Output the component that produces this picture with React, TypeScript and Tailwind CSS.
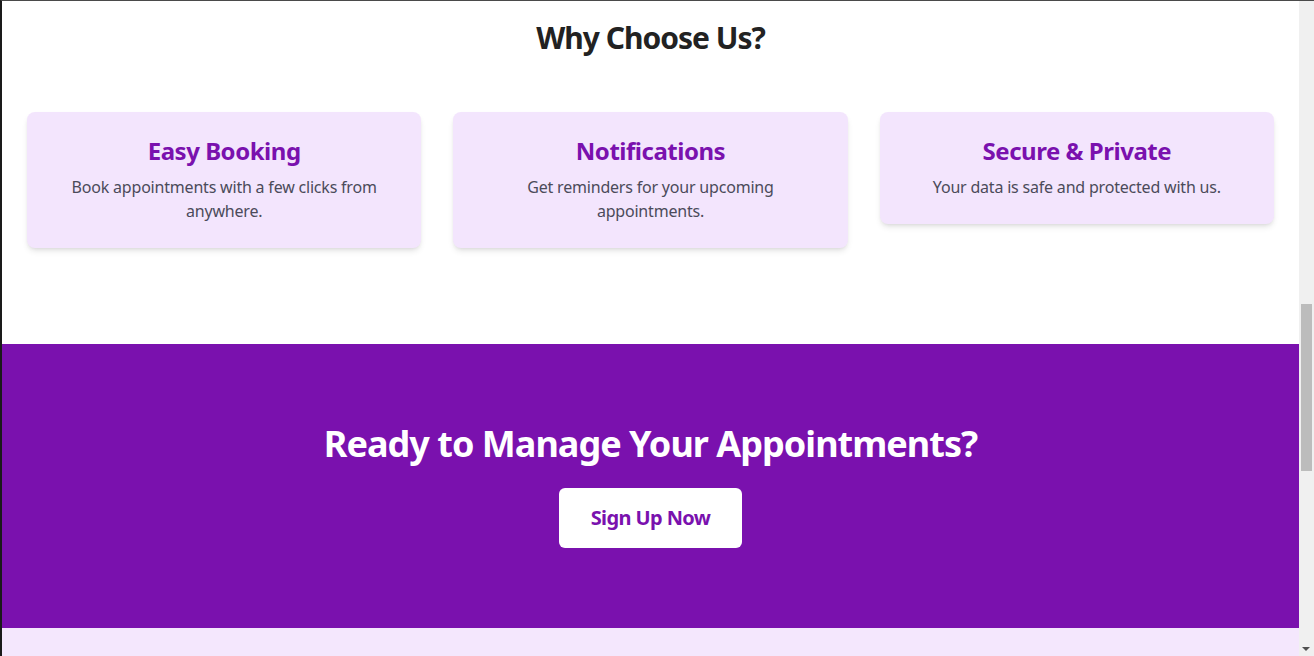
import React from "react";

const features = [
  { title: "Easy Booking", desc: "Book appointments with a few clicks from anywhere." },
  { title: "Notifications", desc: "Get reminders for your upcoming appointments." },
  { title: "Secure & Private", desc: "Your data is safe and protected with us." },
];

export default function App() {
  return (
    <div
      className="flex h-[656px] w-[1314px] overflow-hidden border-t border-l-2 border-t-[#4a4a4a] border-l-[#1a1a1a] bg-white"
      style={{ fontFamily: '"Noto Sans", "Open Sans", sans-serif' }}
    >
      <div className="flex min-w-0 flex-1 flex-col">
        <section className="px-[25px] pt-[19px] pb-24">
          <h2 className="text-center text-3xl font-bold tracking-[-0.033em] text-[#222222]">Why Choose Us?</h2>
          <div className="mt-14 grid grid-cols-3 items-start gap-8">
            {features.map((f) => (
              <div key={f.title} className="rounded-lg bg-[#f3e5fd] px-8 pt-[23px] pb-[25px] text-center shadow-md">
                <h3 className="text-2xl font-bold tracking-[-0.02em] text-[#7a11ae]">{f.title}</h3>
                <p className="mx-auto mt-2 max-w-[320px] text-base leading-6 tracking-[-0.0125em] text-[#4b4b5a]">{f.desc}</p>
              </div>
            ))}
          </div>
        </section>
        <section className="flex flex-col items-center bg-[#7a11ae] py-20">
          <h2 className="text-4xl font-bold tracking-[-0.027em] text-white">Ready to Manage Your Appointments?</h2>
          <button className="mt-6 w-[183px] rounded-md bg-white py-4 text-xl font-bold tracking-[-0.03em] text-[#7a11ae]">
            Sign Up Now
          </button>
        </section>
        <section className="h-40 bg-[#f4e7fd]" />
      </div>
      <div className="relative flex w-[15px] shrink-0 flex-col bg-[#f0f0f0]">
        <div className="absolute top-[303px] left-[2px] h-[167px] w-[11px] bg-[#bcbcbc]" />
        <div className="absolute bottom-[5px] left-[3px] h-0 w-0 border-x-[4px] border-t-[4px] border-x-transparent border-t-[#505050]" />
      </div>
    </div>
  );
}
